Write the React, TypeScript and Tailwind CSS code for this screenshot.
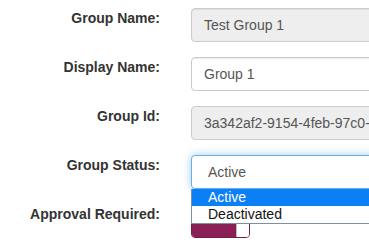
import React from 'react';

const font = { fontFamily: '"Liberation Sans", Arial, sans-serif' };

function Row({ label, children }: { label: string; children: React.ReactNode }) {
  return (
    <div className="flex items-start mb-[15px]">
      <label className="w-[160px] shrink-0 text-right font-bold text-[14px] leading-[20px] text-[#333]">
        {label}
      </label>
      <div className="ml-[31px] w-[260px] shrink-0 relative">{children}</div>
    </div>
  );
}

export default function App() {
  return (
    <div className="w-[369px] h-[245px] overflow-hidden bg-white pt-[8px]" style={font}>
      <Row label="Group Name:">
        <div className="h-[34px] px-[12px] flex items-center rounded-[4px] border border-[#ccc] bg-[#eee] text-[14px] text-[#555] shadow-[inset_0_1px_1px_rgba(0,0,0,0.075)]">
          Test Group 1
        </div>
      </Row>
      <Row label="Display Name:">
        <div className="h-[34px] px-[12px] flex items-center rounded-[4px] border border-[#ccc] bg-white text-[14px] text-[#555] shadow-[inset_0_1px_1px_rgba(0,0,0,0.075)]">
          Group 1
        </div>
      </Row>
      <Row label="Group Id:">
        <div className="h-[34px] px-[12px] flex items-center rounded-[4px] border border-[#ccc] bg-[#eee] text-[14px] text-[#555] whitespace-nowrap">
          3a342af2-9154-4feb-97c0-1d2e
        </div>
      </Row>
      <Row label="Group Status:">
        <div className="h-[34px] px-[16px] flex items-center rounded-[4px] border border-[#66afe9] bg-white text-[14px] text-[#555] shadow-[0_0_8px_rgba(102,175,233,0.6)]">
          Active
        </div>
        <div className="absolute left-0 top-[34px] w-full z-10 bg-white border border-[#7f8fa8] border-t-0 text-[14px] leading-[17px]">
          <div className="bg-[#0b7ff5] text-white pl-[16px]">Active</div>
          <div className="text-[#111] pl-[16px]">Deactivated</div>
        </div>
      </Row>
      <Row label="Approval Required:">
        <div className="w-[59px] h-[34px] flex rounded-[4px] overflow-hidden border border-[#7a1a49]">
          <div className="flex-1 bg-[#8a1f55]" />
          <div className="w-[13px] bg-white border-l border-[#bbb]" />
        </div>
      </Row>
    </div>
  );
}
